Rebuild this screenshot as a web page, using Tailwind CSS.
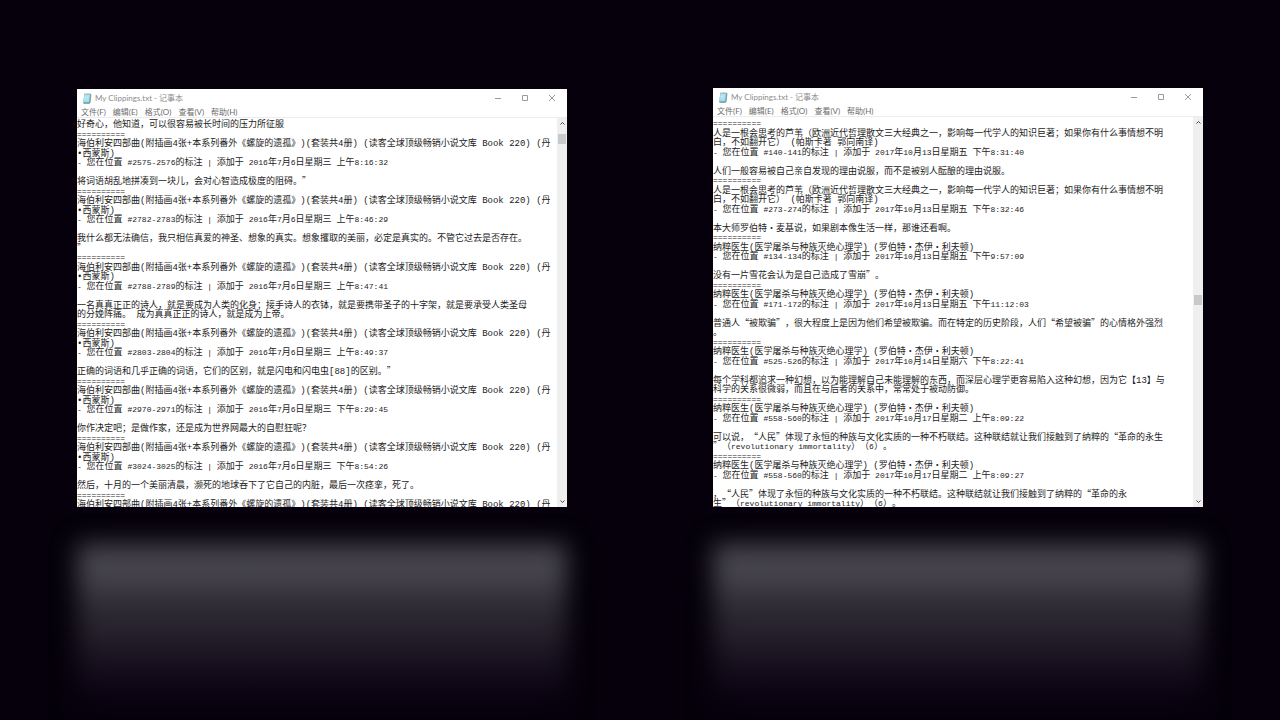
<!DOCTYPE html>
<html lang="zh-CN">
<head>
<meta charset="utf-8">
<title>My Clippings.txt - 记事本</title>
<script src="https://cdn.jsdelivr.net/npm/@tailwindcss/browser@4"></script>
</head>
<body class="bg-[#05000b] font-['Lato','Noto_Sans_CJK_SC',sans-serif]">
<main class="grid min-h-screen grid-cols-2 items-start gap-[146px] overflow-hidden px-[77px] pt-[88px]">

  <div class="min-w-0 pt-px">
    <section class="overflow-hidden bg-white" aria-label="My Clippings.txt">
      <header class="flex h-[18px] items-center pr-[2px] pl-[5px] text-[8px] leading-[18px] text-[#8d8d8d]">
        <svg class="mr-[3px] h-[11px] w-[10px]" viewBox="0 0 20 22"><path d="M5 2h13l-2 18H2z" fill="#65b5ca"/><path d="M5 2h11l-2 16H2z" fill="#a9dde8"/><path d="M6 6h8M5 9h8M5 12h8" stroke="#d9f4f8"/><path d="M5 2h13" stroke="#77868a" stroke-width="2" stroke-dasharray="1.5 1"/><path d="M18 3l-2 17-2 1H3" fill="none" stroke="#6f8d96" stroke-width="1.5"/></svg>
        <h1>My Clippings.txt - 记事本</h1>
        <div class="ml-auto flex text-[#9a9a9a]">
          <button class="flex h-[18px] w-[27px] items-center justify-center" aria-label="最小化"><svg class="size-2" viewBox="0 0 8 8" stroke="currentColor" fill="none"><path d="M1 4.5h6"/></svg></button>
          <button class="flex h-[18px] w-[27px] items-center justify-center" aria-label="最大化"><svg class="size-2" viewBox="0 0 8 8" stroke="currentColor" fill="none"><path d="M1.5 1.5h5v5h-5z"/></svg></button>
          <button class="flex h-[18px] w-[27px] items-center justify-center" aria-label="关闭"><svg class="size-2" viewBox="0 0 8 8" stroke="currentColor" fill="none"><path d="M1 1l6 6M7 1l-6 6"/></svg></button>
        </div>
      </header>
      <nav class="flex h-[11px] gap-[7px] border-b border-[#ededed] pl-[4px] text-[8px] leading-[11px] text-[#6c6c6c]">
        <button>文件(F)</button><button>编辑(E)</button><button>格式(O)</button><button>查看(V)</button><button>帮助(H)</button>
      </nav>
      <div class="flex h-[389px]">
        <div id="left" role="textbox" aria-multiline="true" aria-label="文本" contenteditable="true" spellcheck="false" class="grid h-[391px] min-w-0 flex-1 auto-rows-fr overflow-hidden pt-px font-['Noto_Sans_CJK_SC',sans-serif] text-[9px] leading-[9px] whitespace-pre text-[#1c1c1c] outline-none [text-spacing-trim:space-all]"></div>
        <div class="flex w-[10px] flex-col items-center bg-[#efefef]">
          <svg class="mt-[3px] h-[5px] w-[5px]" viewBox="0 0 5 5" fill="none" stroke="#444"><path d="M.5 3.5l2-2 2 2"/></svg>
          <div class="mt-[8px] h-[10px] w-[8px] bg-[#c9c9c9]"></div>
          <svg class="mt-auto mb-[3px] h-[5px] w-[5px]" viewBox="0 0 5 5" fill="none" stroke="#444"><path d="M.5 1.5l2 2 2-2"/></svg>
        </div>
      </div>
    </section>
    <div class="mt-[36px] h-[170px] bg-linear-to-b from-[#3d3942] from-0% via-[#2b2731] via-45% to-[#05000b] blur-[12px]">
      <div class="h-[60px] bg-linear-to-b from-[#45424a] via-[#47454d] to-transparent"></div>
    </div>
  </div>

  <div class="min-w-0">
    <section class="overflow-hidden bg-white" aria-label="My Clippings.txt">
      <header class="flex h-[18px] items-center pr-[2px] pl-[5px] text-[8px] leading-[18px] text-[#8d8d8d]">
        <svg class="mr-[3px] h-[11px] w-[10px]" viewBox="0 0 20 22"><path d="M5 2h13l-2 18H2z" fill="#65b5ca"/><path d="M5 2h11l-2 16H2z" fill="#a9dde8"/><path d="M6 6h8M5 9h8M5 12h8" stroke="#d9f4f8"/><path d="M5 2h13" stroke="#77868a" stroke-width="2" stroke-dasharray="1.5 1"/><path d="M18 3l-2 17-2 1H3" fill="none" stroke="#6f8d96" stroke-width="1.5"/></svg>
        <h2>My Clippings.txt - 记事本</h2>
        <div class="ml-auto flex text-[#9a9a9a]">
          <button class="flex h-[18px] w-[27px] items-center justify-center" aria-label="最小化"><svg class="size-2" viewBox="0 0 8 8" stroke="currentColor" fill="none"><path d="M1 4.5h6"/></svg></button>
          <button class="flex h-[18px] w-[27px] items-center justify-center" aria-label="最大化"><svg class="size-2" viewBox="0 0 8 8" stroke="currentColor" fill="none"><path d="M1.5 1.5h5v5h-5z"/></svg></button>
          <button class="flex h-[18px] w-[27px] items-center justify-center" aria-label="关闭"><svg class="size-2" viewBox="0 0 8 8" stroke="currentColor" fill="none"><path d="M1 1l6 6M7 1l-6 6"/></svg></button>
        </div>
      </header>
      <nav class="flex h-[11px] gap-[7px] border-b border-[#ededed] pl-[4px] text-[8px] leading-[11px] text-[#6c6c6c]">
        <button>文件(F)</button><button>编辑(E)</button><button>格式(O)</button><button>查看(V)</button><button>帮助(H)</button>
      </nav>
      <div class="flex h-[390px]">
        <div id="right" role="textbox" aria-multiline="true" aria-label="文本" contenteditable="true" spellcheck="false" class="grid h-[391px] min-w-0 flex-1 auto-rows-fr overflow-hidden pt-px font-['Noto_Sans_CJK_SC',sans-serif] text-[9px] leading-[9px] whitespace-pre text-[#1c1c1c] outline-none [text-spacing-trim:space-all]"></div>
        <div class="flex w-[10px] flex-col items-center bg-[#efefef]">
          <svg class="mt-[3px] h-[5px] w-[5px]" viewBox="0 0 5 5" fill="none" stroke="#444"><path d="M.5 3.5l2-2 2 2"/></svg>
          <div class="mt-[170px] h-[10px] w-[8px] bg-[#c9c9c9]"></div>
          <svg class="mt-auto mb-[3px] h-[5px] w-[5px]" viewBox="0 0 5 5" fill="none" stroke="#444"><path d="M.5 1.5l2 2 2-2"/></svg>
        </div>
      </div>
    </section>
    <div class="mt-[36px] h-[170px] bg-linear-to-b from-[#3d3942] from-0% via-[#2b2731] via-45% to-[#05000b] blur-[12px]">
      <div class="h-[60px] bg-linear-to-b from-[#45424a] via-[#47454d] to-transparent"></div>
    </div>
  </div>
</main>

<script>
const files = {
left: `好奇心，他知道，可以很容易被长时间的压力所征服
==========
海伯利安四部曲(附插画4张+本系列番外《螺旋的遗孤》)(套装共4册) (读客全球顶级畅销小说文库 Book 220) (丹
•西蒙斯)
- 您在位置 #2575-2576的标注 | 添加于 2016年7月6日星期三 上午8:16:32

将词语胡乱地拼凑到一块儿，会对心智造成极度的阻碍。”
==========
海伯利安四部曲(附插画4张+本系列番外《螺旋的遗孤》)(套装共4册) (读客全球顶级畅销小说文库 Book 220) (丹
•西蒙斯)
- 您在位置 #2782-2783的标注 | 添加于 2016年7月6日星期三 上午8:46:29

我什么都无法确信，我只相信真爱的神圣、想象的真实。想象攫取的美丽，必定是真实的。不管它过去是否存在。
”
==========
海伯利安四部曲(附插画4张+本系列番外《螺旋的遗孤》)(套装共4册) (读客全球顶级畅销小说文库 Book 220) (丹
•西蒙斯)
- 您在位置 #2788-2789的标注 | 添加于 2016年7月6日星期三 上午8:47:41

一名真真正正的诗人，就是要成为人类的化身；接手诗人的衣钵，就是要携带圣子的十字架，就是要承受人类圣母
的分娩阵痛。 成为真真正正的诗人，就是成为上帝。
==========
海伯利安四部曲(附插画4张+本系列番外《螺旋的遗孤》)(套装共4册) (读客全球顶级畅销小说文库 Book 220) (丹
•西蒙斯)
- 您在位置 #2803-2804的标注 | 添加于 2016年7月6日星期三 上午8:49:37

正确的词语和几乎正确的词语，它们的区别，就是闪电和闪电虫[88]的区别。”
==========
海伯利安四部曲(附插画4张+本系列番外《螺旋的遗孤》)(套装共4册) (读客全球顶级畅销小说文库 Book 220) (丹
•西蒙斯)
- 您在位置 #2970-2971的标注 | 添加于 2016年7月6日星期三 下午8:29:45

你作决定吧；是做作家，还是成为世界网最大的自慰狂呢？
==========
海伯利安四部曲(附插画4张+本系列番外《螺旋的遗孤》)(套装共4册) (读客全球顶级畅销小说文库 Book 220) (丹
•西蒙斯)
- 您在位置 #3024-3025的标注 | 添加于 2016年7月6日星期三 下午8:54:26

然后，十月的一个美丽清晨，濒死的地球吞下了它自己的内脏，最后一次痉挛，死了。
==========
海伯利安四部曲(附插画4张+本系列番外《螺旋的遗孤》)(套装共4册) (读客全球顶级畅销小说文库 Book 220) (丹`,
right: `==========
人是一根会思考的芦苇（欧洲近代哲理散文三大经典之一，影响每一代学人的知识巨著；如果你有什么事情想不明
白，不如翻开它） (帕斯卡著 郭向南译)
- 您在位置 #140-141的标注 | 添加于 2017年10月13日星期五 下午8:31:40

人们一般容易被自己亲自发现的理由说服，而不是被别人酝酿的理由说服。
==========
人是一根会思考的芦苇（欧洲近代哲理散文三大经典之一，影响每一代学人的知识巨著；如果你有什么事情想不明
白，不如翻开它） (帕斯卡著 郭向南译)
- 您在位置 #273-274的标注 | 添加于 2017年10月13日星期五 下午8:32:46

本大师罗伯特·麦基说，如果剧本像生活一样，那谁还看啊。
==========
纳粹医生(医学屠杀与种族灭绝心理学) (罗伯特·杰伊·利夫顿)
- 您在位置 #134-134的标注 | 添加于 2017年10月13日星期五 下午9:57:09

没有一片雪花会认为是自己造成了雪崩”。
==========
纳粹医生(医学屠杀与种族灭绝心理学) (罗伯特·杰伊·利夫顿)
- 您在位置 #171-172的标注 | 添加于 2017年10月13日星期五 下午11:12:03

普通人“被欺骗”，很大程度上是因为他们希望被欺骗。而在特定的历史阶段，人们“希望被骗”的心情格外强烈
。
==========
纳粹医生(医学屠杀与种族灭绝心理学) (罗伯特·杰伊·利夫顿)
- 您在位置 #525-526的标注 | 添加于 2017年10月14日星期六 下午8:22:41

每个学科都追求一种幻想，以为能理解自己未能理解的东西，而深层心理学更容易陷入这种幻想，因为它【13】与
科学的关系很微弱，而且在与后者的关系中，常常处于被动防御。
==========
纳粹医生(医学屠杀与种族灭绝心理学) (罗伯特·杰伊·利夫顿)
- 您在位置 #558-560的标注 | 添加于 2017年10月17日星期二 上午8:09:22

可以说，“人民”体现了永恒的种族与文化实质的一种不朽联结。这种联结就让我们接触到了纳粹的“革命的永生
”（revolutionary immortality）（6）。
==========
纳粹医生(医学屠杀与种族灭绝心理学) (罗伯特·杰伊·利夫顿)
- 您在位置 #558-560的标注 | 添加于 2017年10月17日星期二 上午8:09:27

，“人民”体现了永恒的种族与文化实质的一种不朽联结。这种联结就让我们接触到了纳粹的“革命的永
生”（revolutionary immortality）（6）。`
};

// Latin runs use the monospaced face; separators and location lines use its smaller size.
for (const [id, text] of Object.entries(files)) {
  const box = document.getElementById(id);
  for (const line of text.split('\n')) {
    const row = document.createElement('p');
    const small = /^[-=”生]/.test(line);
    for (const part of line.split(/([\x20-\x7e•]+)/)) {
      if (!part) continue;
      const run = document.createElement('span');
      run.textContent = part;
      if (/^[\x20-\x7e•]/.test(part)) {
        run.className = small ? "font-['Liberation_Mono',monospace] text-[8px] leading-[9px]" : "font-['Liberation_Mono',monospace] text-[9px] leading-[9px]";
      }
      row.append(run);
    }
    box.append(row);
  }
}
</script>
</body>
</html>
